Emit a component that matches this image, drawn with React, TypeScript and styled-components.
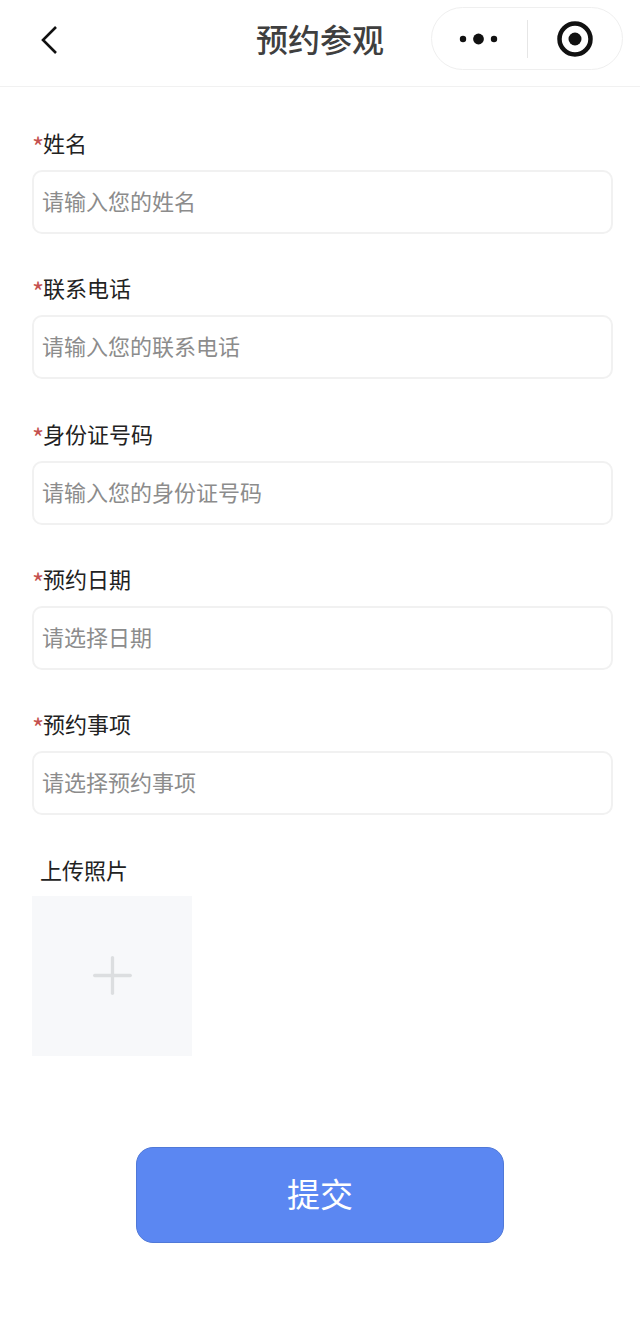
import React from 'react';
import styled, { createGlobalStyle } from 'styled-components';
import { Plus } from 'lucide-react';

const GlobalStyle = createGlobalStyle`
  html, body {
    margin: 0;
    padding: 0;
    background: #fff;
  }
  * {
    box-sizing: border-box;
  }
`;

const Page = styled.div`
  width: 640px;
  height: 1320px;
  overflow: hidden;
  background: #fff;
  font-family: "Noto Sans CJK SC", "Noto Sans", sans-serif;
`;

const Header = styled.header`
  height: 87px;
  display: flex;
  align-items: flex-start;
  justify-content: space-between;
  padding: 7px 17px 0 40px;
  border-bottom: 1px solid #f1f1f1;
  position: relative;
`;

const BackButton = styled.button`
  width: 20px;
  height: 30px;
  margin-top: 18px;
  padding: 0;
  border: 0;
  background: none;
`;

const Title = styled.h1`
  position: absolute;
  left: 0;
  right: 0;
  top: 15px;
  margin: 0;
  text-align: center;
  font-size: 32px;
  line-height: 46px;
  font-weight: 500;
  color: #3f3f3f;
  pointer-events: none;
`;

const Capsule = styled.div`
  width: 192px;
  height: 63px;
  display: flex;
  align-items: center;
  border: 1.5px solid #efefef;
  border-radius: 32px;
  background: #fff;
`;

const CapsuleSide = styled.div`
  flex: 1;
  display: flex;
  align-items: center;
  justify-content: center;
`;

const Divider = styled.div`
  width: 1px;
  height: 38px;
  background: #e6e6e6;
`;

const Form = styled.form`
  display: flex;
  flex-direction: column;
  padding-top: 42px;
`;

const Field = styled.div`
  height: 145.33px;
  padding: 0 27px 0 32px;
  display: flex;
  flex-direction: column;
`;

const Label = styled.label`
  display: block;
  height: 32px;
  margin-bottom: 9px;
  font-size: 22px;
  line-height: 27px;
  color: #222;
`;

const UploadLabel = styled(Label)`
  margin-bottom: 8px;
  padding-left: 8px;
`;

const Star = styled.span`
  display: inline-block;
  width: 11px;
  color: #c4524e;
  font-size: 26px;
  line-height: 10px;
  vertical-align: -5px;
`;

const TextInput = styled.input`
  width: 581px;
  height: 64px;
  padding: 0 8px 4px;
  border: 2px solid #f1f1f1;
  border-radius: 10px;
  outline: none;
  background: #fff;
  font-family: inherit;
  font-size: 22px;
  color: #222;
  &::placeholder {
    color: #8c8c8c;
    opacity: 1;
  }
`;

const UploadField = styled.div`
  padding-left: 32px;
`;

const Upload = styled.div`
  width: 160px;
  height: 160px;
  display: flex;
  align-items: center;
  justify-content: center;
  background: #f7f8fa;
  color: #dcdee0;
`;

const Footer = styled.div`
  display: flex;
  justify-content: center;
  margin-top: 91px;
`;

const SubmitButton = styled.button`
  width: 368px;
  height: 96px;
  padding: 0 0 4px;
  border: 1px solid #5079d8;
  border-radius: 17px;
  background: #5b87f2;
  font-family: inherit;
  font-size: 33px;
  color: #fff;
`;

const fields = [
  { label: '姓名', placeholder: '请输入您的姓名' },
  { label: '联系电话', placeholder: '请输入您的联系电话' },
  { label: '身份证号码', placeholder: '请输入您的身份证号码' },
  { label: '预约日期', placeholder: '请选择日期' },
  { label: '预约事项', placeholder: '请选择预约事项' },
];

function App() {
  return (
    <Page>
      <GlobalStyle />
      <Header>
        <BackButton type="button" aria-label="返回">
          <svg width="20" height="30" viewBox="0 0 20 30" fill="none">
            <path d="M16 2 L3 15 L16 28" stroke="#111" strokeWidth="2.6" />
          </svg>
        </BackButton>
        <Title>预约参观</Title>
        <Capsule>
          <CapsuleSide>
            <svg width="40" height="12" viewBox="0 0 40 12" fill="#111">
              <circle cx="4" cy="6" r="3.2" />
              <circle cx="19.5" cy="6" r="5.4" />
              <circle cx="35" cy="6" r="3.2" />
            </svg>
          </CapsuleSide>
          <Divider />
          <CapsuleSide>
            <svg width="38" height="38" viewBox="0 0 38 38" fill="none">
              <circle cx="19" cy="19" r="15.5" stroke="#111" strokeWidth="4.5" />
              <circle cx="19" cy="19" r="6.5" fill="#111" />
            </svg>
          </CapsuleSide>
        </Capsule>
      </Header>
      <Form>
        {fields.map((field) => (
          <Field key={field.label}>
            <Label>
              <Star>*</Star>
              {field.label}
            </Label>
            <TextInput placeholder={field.placeholder} />
          </Field>
        ))}
        <UploadField>
          <UploadLabel>上传照片</UploadLabel>
          <Upload>
            <Plus size={61} strokeWidth={1.3} />
          </Upload>
        </UploadField>
        <Footer>
          <SubmitButton type="button">提交</SubmitButton>
        </Footer>
      </Form>
    </Page>
  );
}

export default App;
